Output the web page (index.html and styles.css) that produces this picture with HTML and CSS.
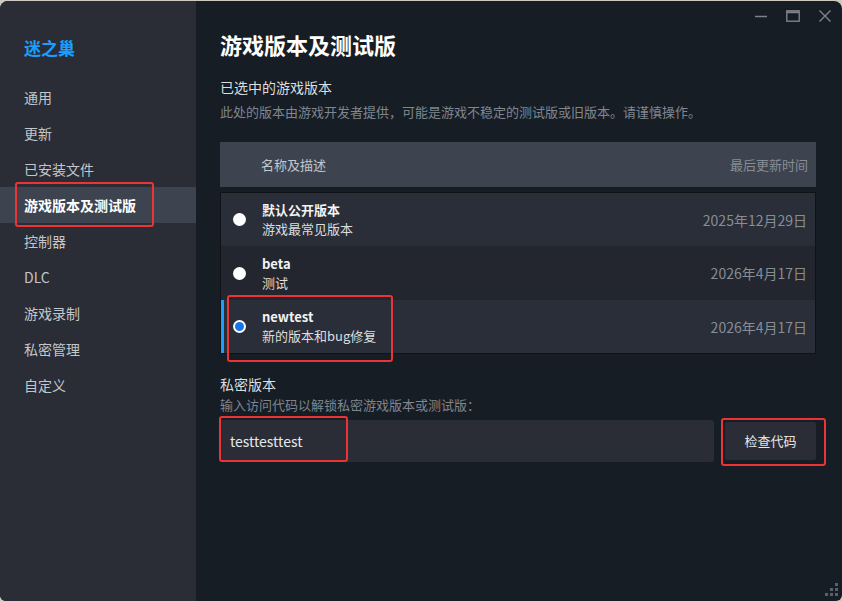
FILE: index.html
```html
<!DOCTYPE html>
<html lang="zh-CN">
<head>
<meta charset="utf-8">
<title>游戏版本及测试版</title>
<link rel="stylesheet" href="styles.css">
</head>
<body>
<div class="window">
  <aside class="sidebar">
    <div class="logo">迷之巢</div>
    <nav class="nav">
      <div class="nav-item">通用</div>
      <div class="nav-item">更新</div>
      <div class="nav-item">已安装文件</div>
      <div class="nav-item active">游戏版本及测试版<span class="mark mark-nav"></span></div>
      <div class="nav-item">控制器</div>
      <div class="nav-item">DLC</div>
      <div class="nav-item">游戏录制</div>
      <div class="nav-item">私密管理</div>
      <div class="nav-item">自定义</div>
    </nav>
  </aside>
  <main class="main">
    <div class="controls">
      <svg class="ctl" width="16" height="16" viewBox="0 0 16 16"><path d="M2 8.5h12" stroke="#7d838b" stroke-width="1.6"/></svg>
      <svg class="ctl" width="16" height="16" viewBox="0 0 16 16"><rect x="1.8" y="2.8" width="12.4" height="10.4" fill="none" stroke="#7d838b" stroke-width="1.4"/><path d="M1.8 4.2h12.4" stroke="#7d838b" stroke-width="2"/></svg>
      <svg class="ctl" width="16" height="16" viewBox="0 0 16 16"><path d="M2.5 2.5l11 11M13.5 2.5l-11 11" stroke="#7d838b" stroke-width="1.4"/></svg>
    </div>
    <h1 class="title">游戏版本及测试版</h1>
    <div class="section-label">已选中的游戏版本</div>
    <div class="section-desc">此处的版本由游戏开发者提供，可能是游戏不稳定的测试版或旧版本。请谨慎操作。</div>
    <div class="table-head">
      <span class="th-name">名称及描述</span>
      <span class="th-date">最后更新时间</span>
    </div>
    <div class="rows">
      <div class="row row-light">
        <span class="radio"></span>
        <div class="row-text">
          <div class="row-title">默认公开版本</div>
          <div class="row-sub">游戏最常见版本</div>
        </div>
        <span class="row-date">2025年12月29日</span>
      </div>
      <div class="row row-dark">
        <span class="radio"></span>
        <div class="row-text">
          <div class="row-title">beta</div>
          <div class="row-sub">测试</div>
        </div>
        <span class="row-date">2026年4月17日</span>
      </div>
      <div class="row row-light row-selected">
        <span class="radio checked"></span>
        <div class="row-text">
          <div class="row-title">newtest</div>
          <div class="row-sub">新的版本和bug修复</div>
        </div>
        <span class="row-date">2026年4月17日</span>
        <span class="mark mark-row"></span>
      </div>
    </div>
    <div class="private-label">私密版本</div>
    <div class="private-desc">输入访问代码以解锁私密游戏版本或测试版：</div>
    <div class="code-row">
      <div class="code-input">testtesttest<span class="mark mark-input"></span></div>
      <div class="code-btn">检查代码<span class="mark mark-btn"></span></div>
    </div>
    <div class="grip">
      <span class="g g1"></span>
      <span class="g g2"></span><span class="g g3"></span>
      <span class="g g4"></span><span class="g g5"></span><span class="g g6"></span>
    </div>
  </main>
</div>
</body>
</html>
```
FILE: styles.css
```css
* { box-sizing: border-box; }
html, body { margin: 0; padding: 0; }
body {
  width: 842px;
  height: 601px;
  overflow: hidden;
  background: #cfc9bf;
  font-family: "Noto Sans CJK SC", "Noto Sans", sans-serif;
}
.window {
  margin-top: 1px;
  height: 600px;
  display: flex;
  border-radius: 8px 8px 6px 6px;
  overflow: hidden;
  background: #171d25;
}
.sidebar {
  width: 196px;
  flex: none;
  background: #2a2d35;
  padding-top: 35px;
}
.logo {
  padding-left: 24px;
  height: 24px;
  line-height: 24px;
  font-size: 17px;
  font-weight: 700;
  color: #1a9fff;
  margin-bottom: 19px;
}
.nav { display: flex; flex-direction: column; }
.nav-item {
  position: relative;
  height: 36px;
  line-height: 36px;
  padding-left: 24px;
  font-size: 14px;
  color: #c3c7cc;
}
.nav-item.active {
  background: #3d4450;
  color: #ffffff;
  font-weight: 700;
}
.mark {
  position: absolute;
  border: 2px solid #ec3434;
  border-radius: 3px;
  pointer-events: none;
}
.mark-nav { left: 15px; top: -5px; width: 139px; height: 45px; }

.main {
  flex: 1;
  position: relative;
  padding: 24px 26px 0 24px;
}
.controls {
  position: absolute;
  top: 7px;
  right: 9px;
  display: flex;
  gap: 16px;
}
.ctl { display: block; }
.title {
  margin: 0;
  font-size: 22px;
  line-height: 38px;
  font-weight: 700;
  color: #ffffff;
}
.section-label {
  margin-top: 14px;
  font-size: 14px;
  line-height: 20px;
  color: #dcdedf;
}
.section-desc {
  margin-top: 5px;
  font-size: 13px;
  line-height: 20px;
  color: #7f868e;
}
.table-head {
  margin-top: 20px;
  height: 45px;
  background: #3d4450;
  display: flex;
  align-items: center;
  justify-content: space-between;
  padding: 0 8px 0 41px;
  font-size: 13px;
}
.th-name { color: #c3c7cc; }
.th-date { color: #878d95; }
.rows {
  margin-top: 5px;
  border: 1px solid #0f1318;
  display: flex;
  flex-direction: column;
}
.row {
  position: relative;
  height: 53px;
  display: flex;
  align-items: center;
  padding: 0 8px 0 12px;
}
.row-light { background: #2a2e38; }
.row-dark { background: #23262e; height: 54px; }
.row-selected { box-shadow: inset 3px 0 0 #1a9fff; }
.radio {
  width: 13px;
  height: 13px;
  border-radius: 50%;
  background: #ffffff;
  flex: none;
  margin-right: 16px;
  display: flex;
  align-items: center;
  justify-content: center;
}
.radio.checked::after {
  content: "";
  width: 9px;
  height: 9px;
  border-radius: 50%;
  background: #1a73e8;
}
.row-text { flex: 1; }
.row-title {
  font-size: 13px;
  line-height: 19px;
  font-weight: 700;
  color: #f2f3f4;
}
.row-sub {
  font-size: 13px;
  line-height: 20px;
  color: #dcdedf;
}
.row-date {
  font-size: 14px;
  color: #878d95;
}
.mark-row { left: 6px; top: -5px; width: 166px; height: 67px; }

.private-label {
  margin-top: 20px;
  font-size: 14px;
  line-height: 20px;
  color: #dcdedf;
}
.private-desc {
  margin-top: 1px;
  font-size: 13px;
  line-height: 20px;
  color: #7f868e;
}
.code-row {
  margin-top: 5px;
  display: flex;
  align-items: center;
  gap: 11px;
}
.code-input {
  position: relative;
  flex: 1;
  height: 42px;
  line-height: 42px;
  background: #2a2d35;
  border-radius: 3px;
  padding-left: 10px;
  font-size: 14px;
  color: #e6e8ea;
}
.mark-input { left: -1px; top: -4px; width: 129px; height: 46px; }
.code-btn {
  position: relative;
  width: 91px;
  height: 38px;
  line-height: 38px;
  text-align: center;
  background: #2a2d35;
  border-radius: 2px;
  font-size: 13px;
  color: #e6e8ea;
}
.mark-btn { left: -4px; top: -4px; width: 105px; height: 48px; }

.grip {
  position: absolute;
  right: 4px;
  bottom: 5px;
  width: 13px;
  height: 13px;
}
.g {
  position: absolute;
  width: 3px;
  height: 3px;
  background: #5a6069;
}
.g1 { right: 0; top: 0; }
.g2 { right: 0; top: 5px; }
.g3 { right: 5px; top: 5px; }
.g4 { right: 0; top: 10px; }
.g5 { right: 5px; top: 10px; }
.g6 { right: 10px; top: 10px; }
```
